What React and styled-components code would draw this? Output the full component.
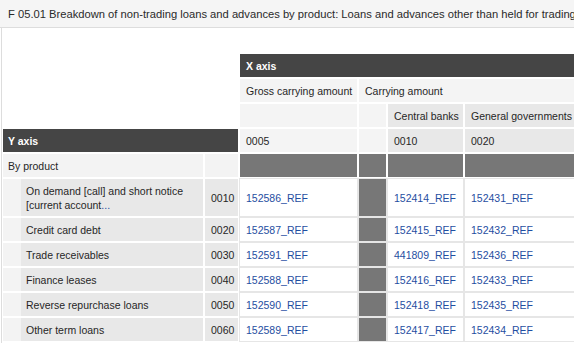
import React from 'react';
import styled, { createGlobalStyle } from 'styled-components';

const Global = createGlobalStyle`
  html, body { margin: 0; padding: 0; background: #fff; overflow: hidden; }
  body { font-family: "Liberation Sans", Arial, sans-serif; }
`;

const Page = styled.div`
  width: 574px;
  height: 343px;
  overflow: hidden;
`;

const Heading = styled.div`
  height: 27px;
  background: #f5f5f5;
  border-bottom: 1px solid #ddd;
  padding-left: 8px;
  font-size: 11.2px;
  line-height: 28px;
  color: #2a2a2a;
  white-space: nowrap;
  overflow: hidden;
`;

const Body = styled.div`
  margin-left: 1px;
  border-left: 1px solid #ddd;
  padding-top: 25px;
  height: 400px;
`;

const Grid = styled.div`
  display: grid;
  grid-template-columns: 202px 35px 119px 29px 77px 180px;
  grid-template-rows: repeat(5, 25px) 39px repeat(5, 25px);
  width: max-content;
  font-size: 10.5px;
  color: #262626;
`;

const BaseCell = styled.div`
  box-sizing: border-box;
  border: 1px solid #fff;
  display: flex;
  align-items: center;
  padding: 0 6px;
  white-space: nowrap;
  overflow: hidden;
  grid-column: ${p => p.$col || 'auto'};
  grid-row: ${p => p.$row || 'auto'};
`;

const Corner = styled(BaseCell)`
  background: #fff;
`;

const AxisCell = styled(BaseCell)`
  background: #454545;
  color: #fff;
  font-weight: bold;
  padding-left: ${p => p.$pad || 6}px;
`;

const HeadCell = styled(BaseCell)`
  background: ${p => (p.$dark ? '#e8e8e8' : '#f4f4f4')};
`;

const GroupLabel = styled(BaseCell)`
  background: #f3f3f3;
  padding-left: 5px;
`;

const RowLabel = styled(BaseCell)`
  background: linear-gradient(to right, #f3f3f3 18px, #e8e8e8 18px);
  padding-left: 23px;
  line-height: 14px;
`;

const RowCode = styled(BaseCell)`
  background: ${p => (p.$light ? '#f3f3f3' : '#e8e8e8')};
`;

const Shaded = styled(BaseCell)`
  background: #777;
`;

const DataCell = styled(BaseCell)`
  background: #fff;
  border-color: #e6e6e6;
  color: #1f4ea1;
`;

const BlockedCell = styled(BaseCell)`
  background: #777;
  border-color: #e6e6e6;
`;

const More = styled.span`
  color: #1f4ea1;
`;

const rows = [
  { label: 'multi', code: '0010', refs: ['152586_REF', '152414_REF', '152431_REF'] },
  { label: 'Credit card debt', code: '0020', refs: ['152587_REF', '152415_REF', '152432_REF'] },
  { label: 'Trade receivables', code: '0030', refs: ['152591_REF', '441809_REF', '152436_REF'] },
  { label: 'Finance leases', code: '0040', refs: ['152588_REF', '152416_REF', '152433_REF'] },
  { label: 'Reverse repurchase loans', code: '0050', refs: ['152590_REF', '152418_REF', '152435_REF'] },
  { label: 'Other term loans', code: '0060', refs: ['152589_REF', '152417_REF', '152434_REF'] },
];

export default function App() {
  return (
    <Page>
      <Global />
      <Heading>
        F 05.01 Breakdown of non-trading loans and advances by product: Loans and advances other than held for trading
      </Heading>
      <Body>
        <Grid>
          <Corner $col="1 / 3" $row="1 / 4" />
          <AxisCell $col="3 / 7" $row="1">X axis</AxisCell>

          <HeadCell $col="3" $row="2">Gross carrying amount</HeadCell>
          <HeadCell $col="4 / 7" $row="2">Carrying amount</HeadCell>

          <HeadCell $col="3" $row="3" />
          <HeadCell $col="4" $row="3" />
          <HeadCell $dark $col="5" $row="3">Central banks</HeadCell>
          <HeadCell $dark $col="6" $row="3">General governments</HeadCell>

          <AxisCell $pad={5} $col="1 / 3" $row="4">Y axis</AxisCell>
          <HeadCell $col="3" $row="4">0005</HeadCell>
          <HeadCell $col="4" $row="4" />
          <HeadCell $dark $col="5" $row="4">0010</HeadCell>
          <HeadCell $dark $col="6" $row="4">0020</HeadCell>

          <GroupLabel $col="1" $row="5">By product</GroupLabel>
          <RowCode $light $col="2" $row="5" />
          <Shaded $col="3" $row="5" />
          <Shaded $col="4" $row="5" />
          <Shaded $col="5" $row="5" />
          <Shaded $col="6" $row="5" />

          {rows.map((r, i) => (
            <React.Fragment key={r.code}>
              <RowLabel $col="1" $row={String(6 + i)}>
                {r.label === 'multi' ? (
                  <span>
                    On demand [call] and short notice
                    <br />
                    [current account<More>...</More>
                  </span>
                ) : (
                  r.label
                )}
              </RowLabel>
              <RowCode $col="2" $row={String(6 + i)}>{r.code}</RowCode>
              <DataCell $col="3" $row={String(6 + i)}>{r.refs[0]}</DataCell>
              <BlockedCell $col="4" $row={String(6 + i)} />
              <DataCell $col="5" $row={String(6 + i)}>{r.refs[1]}</DataCell>
              <DataCell $col="6" $row={String(6 + i)}>{r.refs[2]}</DataCell>
            </React.Fragment>
          ))}
        </Grid>
      </Body>
    </Page>
  );
}
